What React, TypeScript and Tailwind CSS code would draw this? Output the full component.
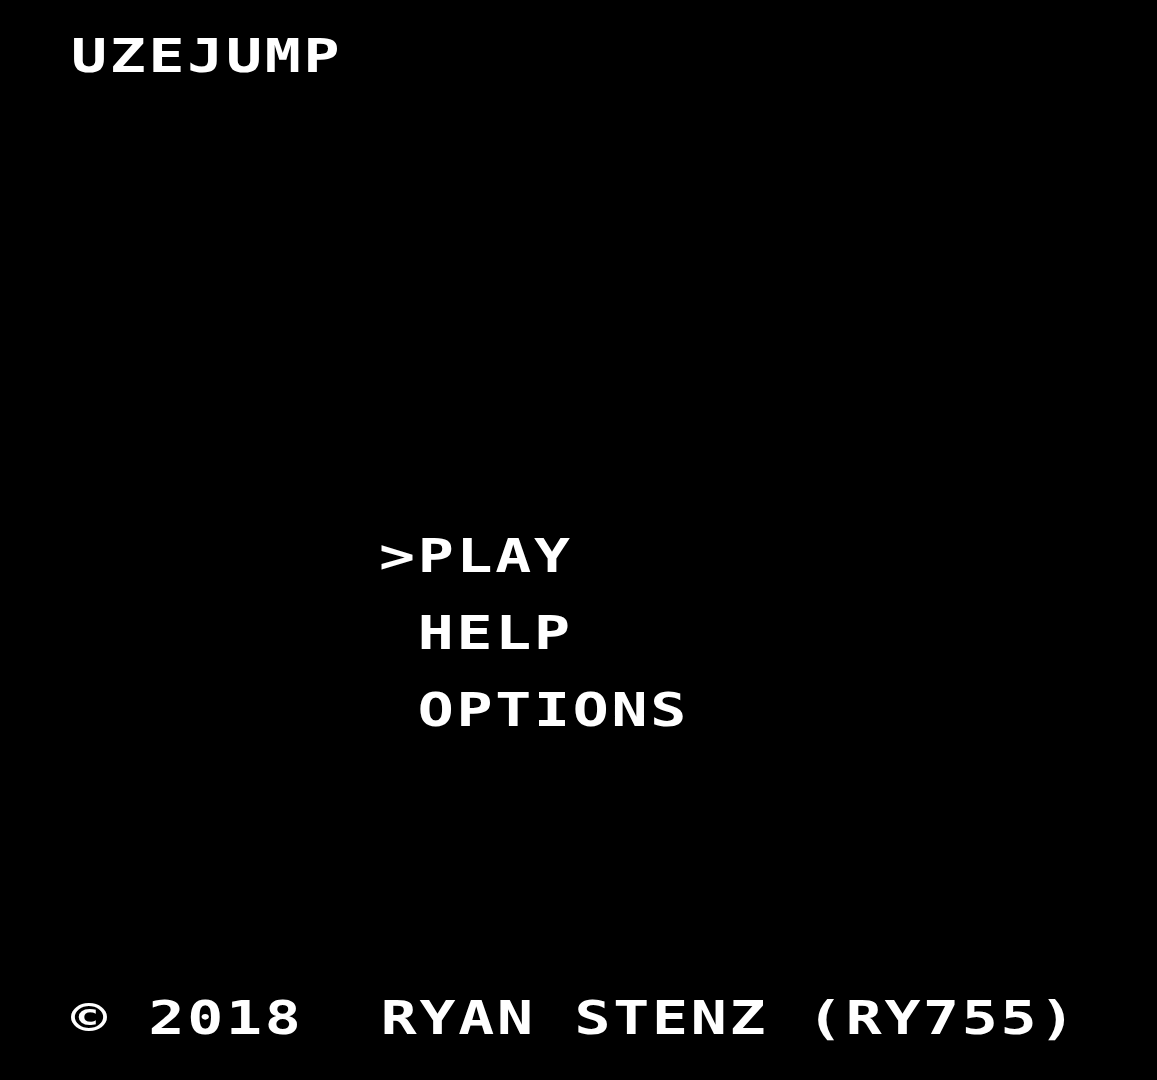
const MENU = [">PLAY", " HELP", " OPTIONS"];

function Line({ text, className = "" }: { text: string; className?: string }) {
  return (
    <div className={`h-[38.5px] leading-[38.5px] whitespace-pre ${className}`}>
      <span className="inline-block origin-left scale-x-[1.3] tracking-[2.1px]">{text}</span>
    </div>
  );
}

export default function App() {
  return (
    <div
      className="w-[1157px] h-[1080px] bg-black text-white overflow-hidden flex flex-col pt-[36.5px] pl-[71px] text-[46px] font-bold"
      style={{ fontFamily: '"DejaVu Sans Mono", "Liberation Mono", monospace' }}
    >
      <Line text="UZEJUMP" />

      {/* menu sits on column 8 of the text grid */}
      <div className="mt-[462px] pl-[308px] flex flex-col gap-[38.5px]">
        {MENU.map((m) => (
          <Line key={m} text={m} />
        ))}
      </div>

      <Line text="© 2018  RYAN STENZ (RY755)" className="mt-[269.5px]" />
    </div>
  );
}
